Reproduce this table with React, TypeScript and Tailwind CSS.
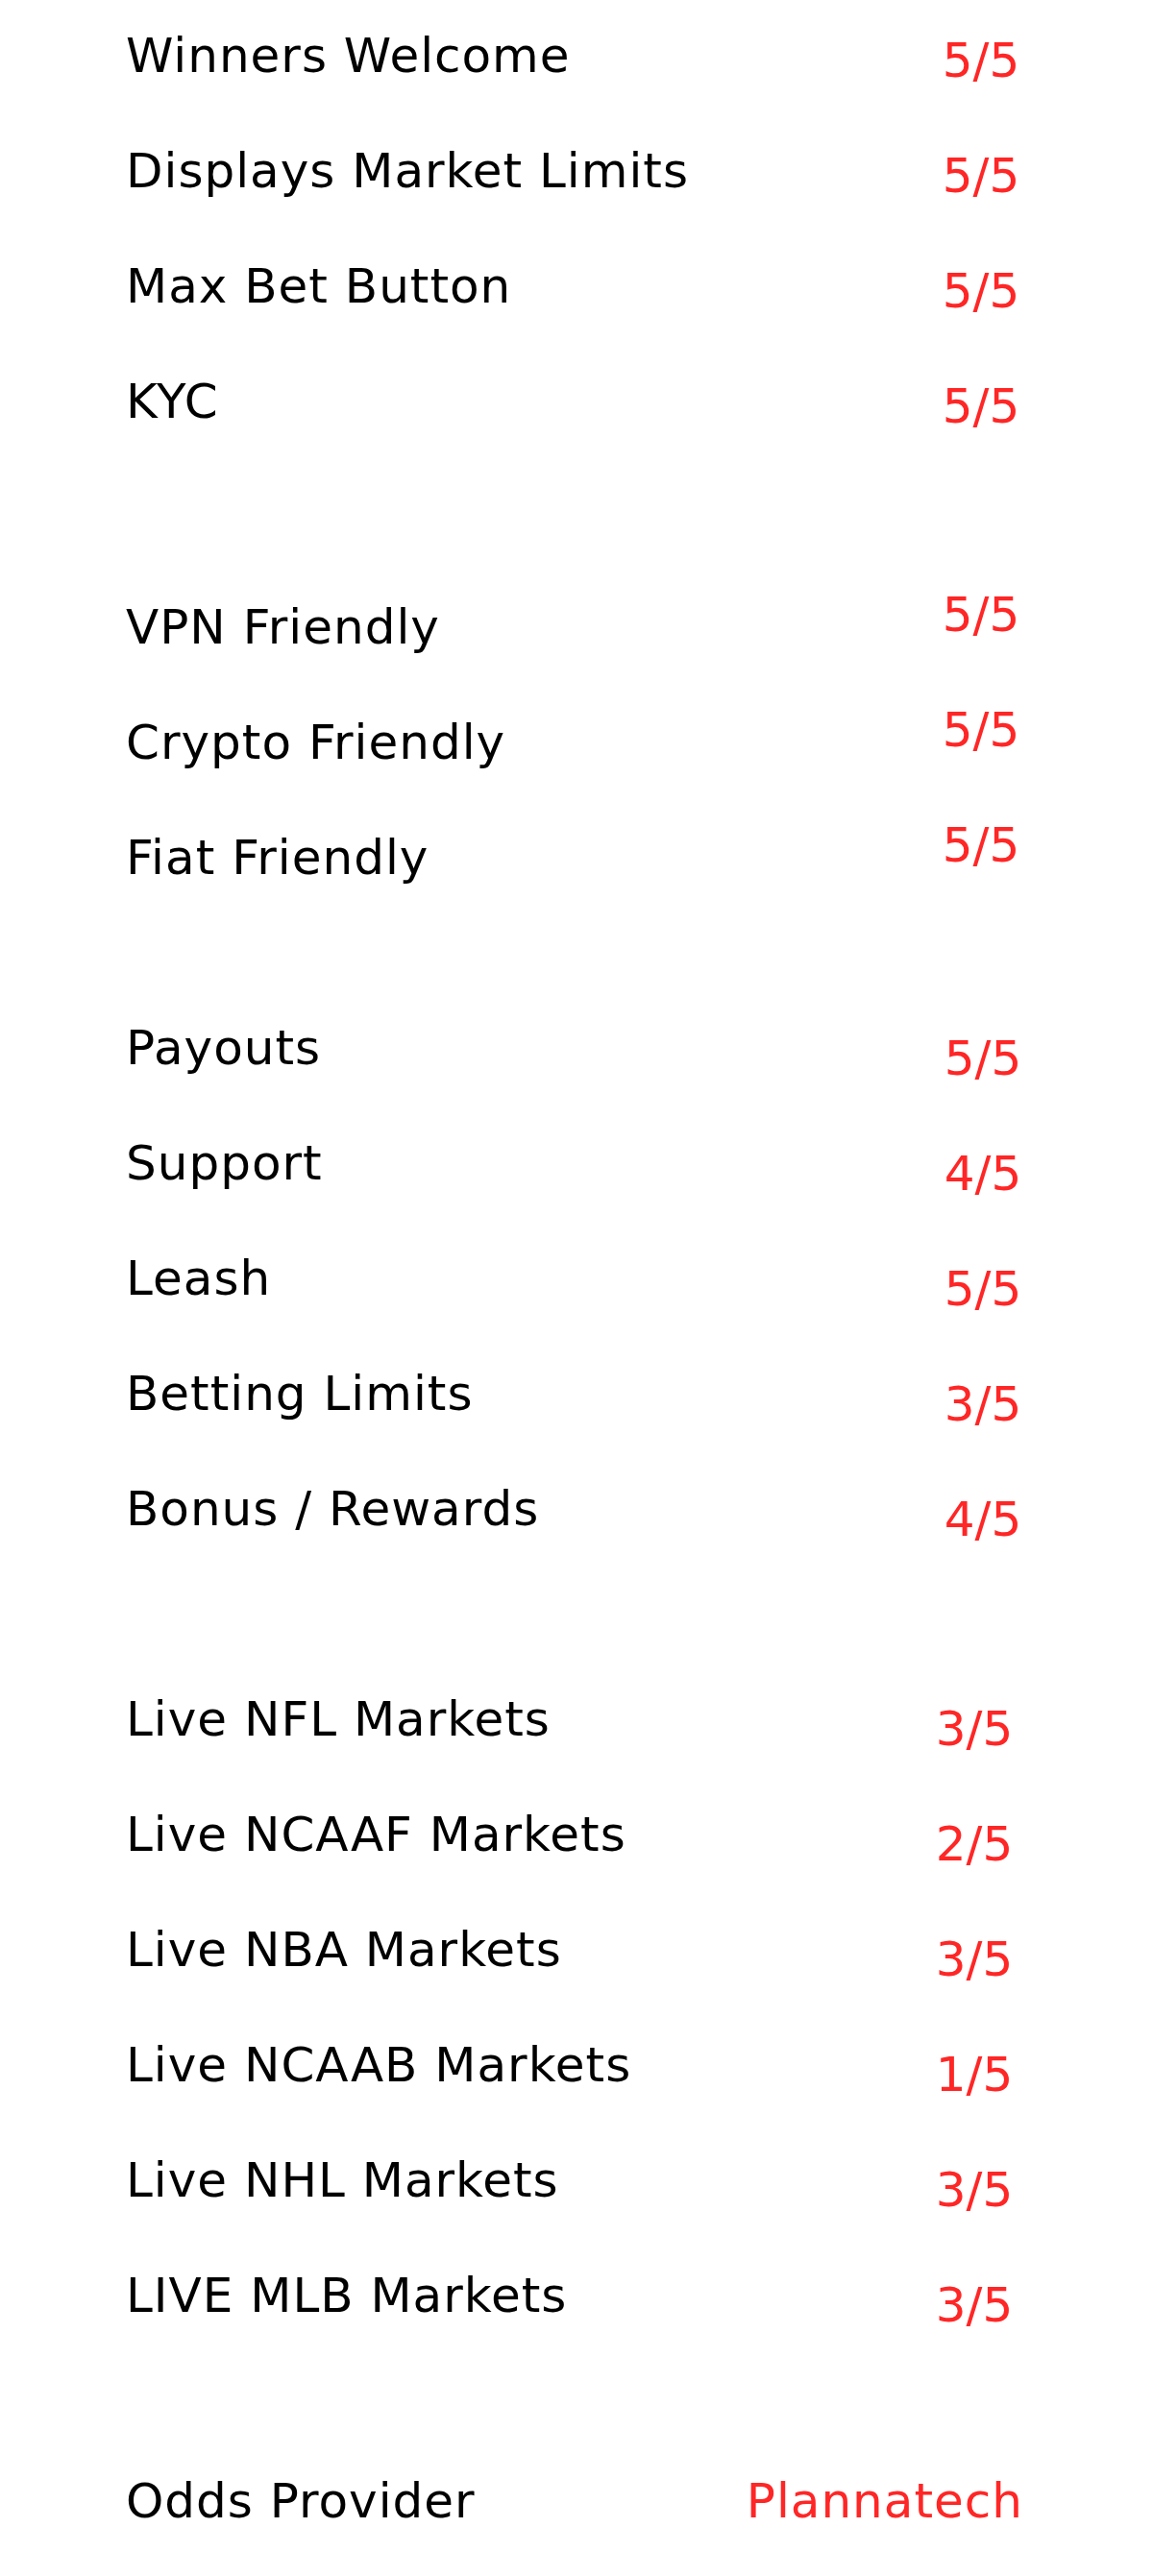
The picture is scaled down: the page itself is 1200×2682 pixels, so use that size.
import React from 'react';

type Row = { label: string; value: string };

interface Section {
  rows: Row[];
  gap: string;
  labelMt: string;
  valueMt: string;
  valueBox: string;
  rowH?: string;
}

const sections: Section[] = [
  {
    gap: 'mt-0',
    labelMt: 'mt-0',
    valueMt: 'mt-[5px]',
    valueBox: 'w-[140px] text-center',
    rows: [
      { label: 'Winners Welcome', value: '5/5' },
      { label: 'Displays Market Limits', value: '5/5' },
      { label: 'Max Bet Button', value: '5/5' },
      { label: 'KYC', value: '5/5' },
    ],
  },
  {
    gap: 'mt-[102px]',
    labelMt: 'mt-[13px]',
    valueMt: 'mt-0',
    valueBox: 'w-[140px] text-center',
    rows: [
      { label: 'VPN Friendly', value: '5/5' },
      { label: 'Crypto Friendly', value: '5/5' },
      { label: 'Fiat Friendly', value: '5/5' },
    ],
  },
  {
    gap: 'mt-[91px]',
    labelMt: 'mt-0',
    valueMt: 'mt-[11px]',
    valueBox: 'w-[140px] text-center -mr-[2px]',
    rows: [
      { label: 'Payouts', value: '5/5' },
      { label: 'Support', value: '4/5' },
      { label: 'Leash', value: '5/5' },
      { label: 'Betting Limits', value: '3/5' },
      { label: 'Bonus / Rewards', value: '4/5' },
    ],
  },
  {
    gap: 'mt-[99px]',
    labelMt: 'mt-0',
    valueMt: 'mt-[10px]',
    valueBox: 'w-[140px] text-center mr-[7px]',
    rows: [
      { label: 'Live NFL Markets', value: '3/5' },
      { label: 'Live NCAAF Markets', value: '2/5' },
      { label: 'Live NBA Markets', value: '3/5' },
      { label: 'Live NCAAB Markets', value: '1/5' },
      { label: 'Live NHL Markets', value: '3/5' },
      { label: 'LIVE MLB Markets', value: '3/5' },
    ],
  },
  {
    gap: 'mt-[94px]',
    labelMt: 'mt-0',
    valueMt: 'mt-0',
    valueBox: 'text-right mr-[26px] tracking-[1px]',
    rowH: 'h-[100px]',
    rows: [{ label: 'Odds Provider', value: 'Plannatech' }],
  },
];

export default function App() {
  return (
    <div className="min-h-screen w-full bg-white pt-[33px] pl-[131px] pr-[109px] font-['DejaVu_Sans',sans-serif] text-[50px] leading-[50px]">
      {sections.map((section, i) => (
        <div key={i} className={section.gap}>
          {section.rows.map((row) => (
            <div key={row.label} className={`flex items-start justify-between ${section.rowH ?? 'h-[120px]'}`}>
              <span className={`${section.labelMt} text-black tracking-[1px]`}>{row.label}</span>
              <span className={`${section.valueMt} ${section.valueBox} text-[#ff2626]`}>{row.value}</span>
            </div>
          ))}
        </div>
      ))}
    </div>
  );
}
